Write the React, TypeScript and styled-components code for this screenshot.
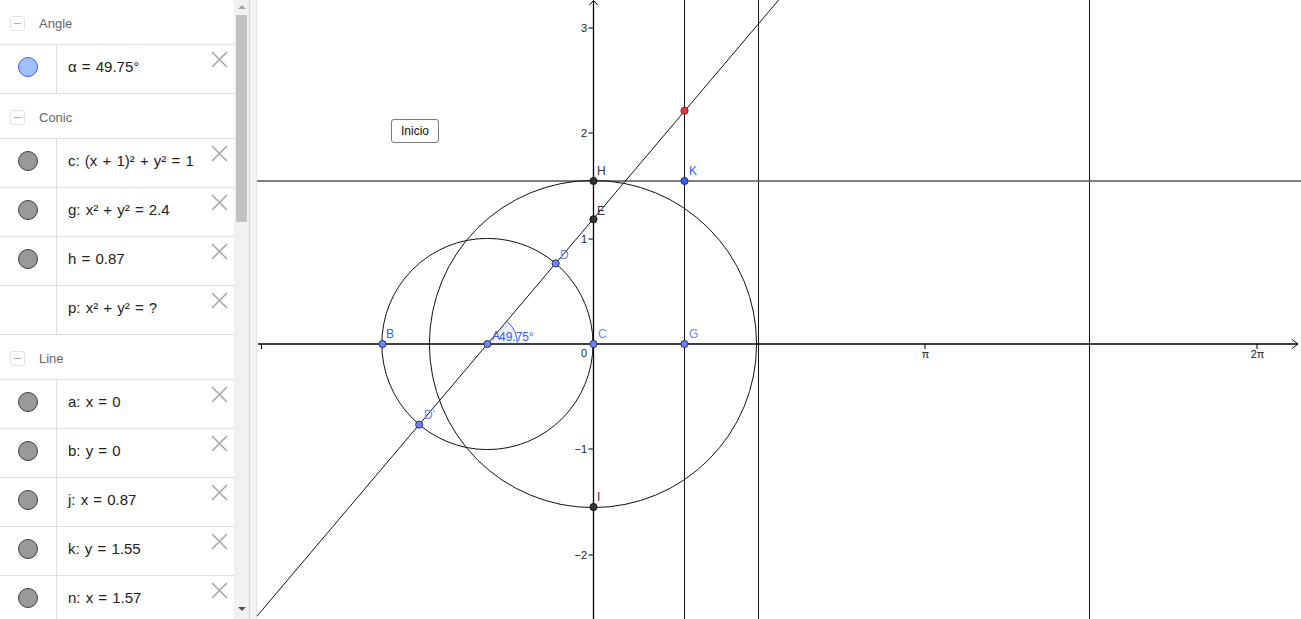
import React from "react";
import styled, { createGlobalStyle } from "styled-components";

const Global = createGlobalStyle`
  html, body { margin: 0; padding: 0; overflow: hidden; background: #fff; }
  body { font-family: "Liberation Sans", Arial, sans-serif; }
`;

const Page = styled.div`
  display: flex;
  width: 1301px;
  height: 619px;
  overflow: hidden;
`;

const AlgebraPanel = styled.div`
  width: 234px;
  flex: none;
  height: 619px;
  overflow: hidden;
  background: #fff;
`;

const SectionHeader = styled.div`
  display: flex;
  align-items: center;
  height: 45px;
  padding-top: 3px;
  box-sizing: border-box;
  border-bottom: 1px solid #dedede;
  color: #666;
  font-size: 13px;
  font-family: "Liberation Sans", Arial, sans-serif;
`;

const CollapseBox = styled.span`
  width: 15px;
  height: 15px;
  margin: 0 14px 0 10px;
  border: 1px solid #e2e2e2;
  border-radius: 3px;
  box-sizing: border-box;
  display: flex;
  align-items: center;
  justify-content: center;
  &::after {
    content: "";
    width: 7px;
    height: 1px;
    background: #aaa;
  }
`;

const Row = styled.div`
  display: flex;
  height: 49px;
  box-sizing: border-box;
  border-bottom: 1px solid #dedede;
`;

const MarbleCell = styled.div`
  width: 57px;
  flex: none;
  box-sizing: border-box;
  padding-bottom: 4px;
  border-right: 1px solid #dedede;
  display: flex;
  align-items: center;
  justify-content: center;
`;

const Marble = styled.span<{ $fill: string; $edge: string }>`
  width: 20px;
  height: 20px;
  border-radius: 50%;
  box-sizing: border-box;
  background: ${(p) => p.$fill};
  border: 1px solid ${(p) => p.$edge};
  margin-left: -1px;
`;

const Formula = styled.div`
  flex: 1;
  display: flex;
  align-items: center;
  padding: 0 0 5px 11px;
  font-size: 15px;
  word-spacing: 1px;
  color: #222;
  font-family: "Liberation Sans", Arial, sans-serif;
  white-space: nowrap;
`;

const DeleteIcon = styled.svg`
  flex: none;
  align-self: flex-start;
  margin: 6px 6px 0 0;
`;

const ScrollTrack = styled.div`
  width: 15px;
  flex: none;
  height: 619px;
  background: #f1f1f1;
  display: flex;
  flex-direction: column;
  align-items: center;
`;

const ArrowUp = styled.span`
  margin-top: 5px;
  width: 0;
  height: 0;
  border-left: 4px solid transparent;
  border-right: 4px solid transparent;
  border-bottom: 4px solid #a3a3a3;
`;

const ArrowDown = styled.span`
  margin-top: auto;
  margin-bottom: 8px;
  width: 0;
  height: 0;
  border-left: 4px solid transparent;
  border-right: 4px solid transparent;
  border-top: 4px solid #505050;
`;

const Thumb = styled.div`
  width: 11px;
  height: 207px;
  margin-top: 6px;
  background: #c1c1c1;
`;

const Splitter = styled.div`
  width: 8px;
  flex: none;
  box-sizing: border-box;
  height: 619px;
  background: #f4f4f4;
  border-left: 1px solid #dadada;
  border-right: 1px solid #e3e3e3;
`;

const Canvas = styled.div`
  position: relative;
  flex: 1;
  height: 619px;
  background: #fff;
  overflow: hidden;
`;

const Plot = styled.svg`
  display: block;
  font-family: "Liberation Sans", Arial, sans-serif;
`;

const InicioButton = styled.button`
  position: absolute;
  left: 134px;
  top: 119px;
  width: 48px;
  height: 24px;
  box-sizing: border-box;
  border: 1px solid #7a7a7a;
  border-radius: 3px;
  background: #fff;
  font-family: "Liberation Sans", Arial, sans-serif;
  font-size: 12px;
  color: #111;
  padding: 0;
`;

type Item = { text: string; marble?: "blue" | "gray" };
type Section = { title: string; items: Item[] };

const sections: Section[] = [
  { title: "Angle", items: [{ text: "α = 49.75°", marble: "blue" }] },
  {
    title: "Conic",
    items: [
      { text: "c: (x + 1)² + y² = 1", marble: "gray" },
      { text: "g: x² + y² = 2.4", marble: "gray" },
      { text: "h = 0.87", marble: "gray" },
      { text: "p: x² + y² = ?" },
    ],
  },
  {
    title: "Line",
    items: [
      { text: "a: x = 0", marble: "gray" },
      { text: "b: y = 0", marble: "gray" },
      { text: "j: x = 0.87", marble: "gray" },
      { text: "k: y = 1.55", marble: "gray" },
      { text: "n: x = 1.57", marble: "gray" },
    ],
  },
];

const Cross = () => (
  <DeleteIcon width="17" height="17" viewBox="0 0 17 17">
    <path d="M1 1 L16 16 M16 1 L1 16" stroke="#a8a8a8" strokeWidth="1.6" fill="none" />
  </DeleteIcon>
);

// graph geometry (page coordinates)
const O = { x: 593, y: 344 };
const U = 105.6;
const A = { x: O.x - U, y: O.y };
const ang = (49.75 * Math.PI) / 180;
const slope = Math.tan(ang);
const D = { x: A.x + U * Math.cos(ang), y: A.y - U * Math.sin(ang) };
const D2 = { x: A.x - U * Math.cos(ang), y: A.y + U * Math.sin(ang) };
const E = { x: O.x, y: O.y - slope * U };
const red = { x: O.x + 0.87 * U, y: O.y - slope * 1.87 * U };
const rg = Math.sqrt(2.4) * U;
const lineAt = (x: number) => A.y - (x - A.x) * slope;
const xAtTop = A.x + A.y / slope;
const ar = 30;
const arcEnd = { x: A.x + ar * Math.cos(ang), y: A.y - ar * Math.sin(ang) };

const blueFill = "#6d84ff";
const lightLabel = "#6f86f5";

const Dot = ({ x, y, fill, edge = "#1f2a44" }: { x: number; y: number; fill: string; edge?: string }) => (
  <circle cx={x} cy={y} r={3.6} fill={fill} stroke={edge} strokeWidth={0.9} />
);

const Graph = () => (
  <Plot width="1044" height="619" viewBox="257 0 1044 619">
    {/* vertical lines */}
    <line x1={684.5} y1={0} x2={684.5} y2={619} stroke="#111" strokeWidth={1} />
    <line x1={758.5} y1={0} x2={758.5} y2={619} stroke="#111" strokeWidth={1} />
    <line x1={1089.5} y1={0} x2={1089.5} y2={619} stroke="#111" strokeWidth={1} />
    {/* horizontal k */}
    <line x1={257} y1={181} x2={1301} y2={181} stroke="#555" strokeWidth={1.4} />
    {/* axes */}
    <line x1={258} y1={344} x2={1298} y2={344} stroke="#000" strokeWidth={1.3} />
    <path d="M1292 339.5 L1298 344 L1292 348.5" stroke="#000" strokeWidth={1} fill="none" />
    <line x1={593.5} y1={1} x2={593.5} y2={619} stroke="#000" strokeWidth={1.3} />
    <path d="M589.5 5 L593.5 0.5 L597.5 5" stroke="#000" strokeWidth={1} fill="none" />
    {[261.5, 925, 1257].map((x) => (
      <line key={x} x1={x} y1={344} x2={x} y2={349} stroke="#000" strokeWidth={1} />
    ))}
    {[28, 133, 239, 449, 555].map((y) => (
      <line key={y} x1={588.5} y1={y} x2={593} y2={y} stroke="#000" strokeWidth={1} />
    ))}
    <g fontSize="11" fill="#222" textAnchor="end">
      <text x={587} y={32}>3</text>
      <text x={587} y={137}>2</text>
      <text x={587} y={243}>1</text>
      <text x={587} y={357}>0</text>
      <text x={587} y={453}>−1</text>
      <text x={587} y={559}>−2</text>
    </g>
    <g fontSize="11" fill="#222" textAnchor="middle">
      <text x={925.5} y={358}>π</text>
      <text x={1257.5} y={358}>2π</text>
    </g>
    {/* circles */}
    <circle cx={A.x} cy={A.y} r={U} fill="none" stroke="#111" strokeWidth={1} />
    <circle cx={O.x} cy={O.y} r={rg} fill="none" stroke="#111" strokeWidth={1} />
    {/* line through A */}
    <line x1={252} y1={lineAt(252)} x2={xAtTop} y2={0} stroke="#111" strokeWidth={1} />
    {/* angle */}
    <path
      d={`M${A.x} ${A.y} L${A.x + ar} ${A.y} A${ar} ${ar} 0 0 0 ${arcEnd.x} ${arcEnd.y} Z`}
      fill="rgba(90,110,200,0.1)"
      stroke="none"
    />
    <path
      d={`M${A.x + ar} ${A.y} A${ar} ${ar} 0 0 0 ${arcEnd.x} ${arcEnd.y}`}
      fill="none"
      stroke="#3b5cf0"
      strokeWidth={1}
    />
    {/* points */}
    <Dot x={382.5} y={344} fill={blueFill} />
    <Dot x={A.x} y={A.y} fill={blueFill} />
    <Dot x={593.5} y={344} fill={blueFill} />
    <Dot x={684.5} y={344} fill={blueFill} />
    <Dot x={D.x} y={D.y} fill={blueFill} />
    <Dot x={D2.x} y={D2.y} fill={blueFill} />
    <Dot x={593.5} y={181} fill="#333" edge="#111" />
    <Dot x={593.5} y={E.y} fill="#333" edge="#111" />
    <Dot x={593.5} y={507} fill="#333" edge="#111" />
    <Dot x={684.5} y={181} fill="#2f5ff5" edge="#1a2a80" />
    <Dot x={684.5} y={red.y} fill="#e53935" edge="#7a1a1a" />
    {/* labels */}
    <g fontSize="12">
      <text x={597} y={175} fill="#333">H</text>
      <text x={689} y={175} fill="#2f5ff5">K</text>
      <text x={597} y={215} fill="#333">E</text>
      <text x={560} y={259} fill={lightLabel}>D</text>
      <text x={492} y={340} fill="#3b5cf0">A</text>
      <text x={499} y={341} fill="#3b5cf0">49.75°</text>
      <text x={386} y={338} fill="#3b5cf0">B</text>
      <text x={598} y={338} fill={lightLabel}>C</text>
      <text x={689} y={338} fill={lightLabel}>G</text>
      <text x={424} y={419} fill={lightLabel}>D'</text>
      <text x={597} y={501} fill="#333">I</text>
    </g>
  </Plot>
);

export default function App() {
  return (
    <>
      <Global />
      <Page>
        <AlgebraPanel>
          {sections.map((s) => (
            <React.Fragment key={s.title}>
              <SectionHeader>
                <CollapseBox />
                {s.title}
              </SectionHeader>
              {s.items.map((it) => (
                <Row key={it.text}>
                  <MarbleCell>
                    {it.marble === "blue" && <Marble $fill="#a0bfff" $edge="#3a62f2" />}
                    {it.marble === "gray" && <Marble $fill="#999" $edge="#3d3d3d" />}
                  </MarbleCell>
                  <Formula>{it.text}</Formula>
                  <Cross />
                </Row>
              ))}
            </React.Fragment>
          ))}
        </AlgebraPanel>
        <ScrollTrack>
          <ArrowUp />
          <Thumb />
          <ArrowDown />
        </ScrollTrack>
        <Splitter />
        <Canvas>
          <Graph />
          <InicioButton>Inicio</InicioButton>
        </Canvas>
      </Page>
    </>
  );
}
